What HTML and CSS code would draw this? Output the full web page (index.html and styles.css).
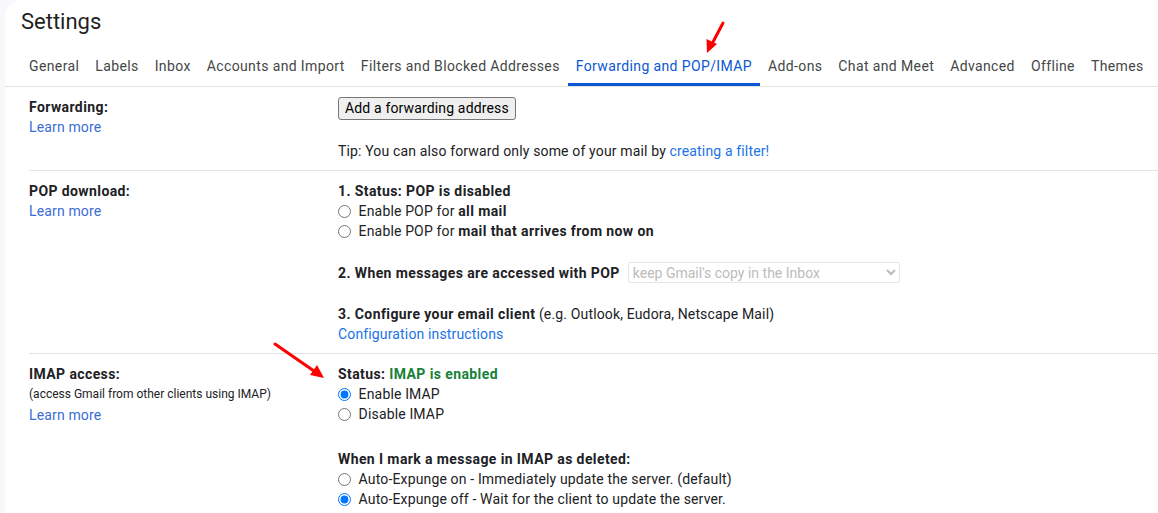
FILE: index.html
```html
<!DOCTYPE html>
<html lang="en">
<head>
  <meta charset="UTF-8" />
  <meta name="viewport" content="width=device-width, initial-scale=1.0"/>
  <title>Settings - Forwarding and POP/IMAP</title>
  <link rel="stylesheet" href="styles.css">
</head>
<body>

  <main class="card">
    <h1 class="title">Settings</h1>

    <!-- Onglets -->
    <nav class="tabs">
      <a class="tab">General</a>
      <a class="tab">Labels</a>
      <a class="tab">Inbox</a>
      <a class="tab">Accounts and Import</a>
      <a class="tab">Filters and Blocked Addresses</a>
      <a class="tab active">Forwarding and POP/IMAP</a>
      <a class="tab">Add-ons</a>
      <a class="tab">Chat and Meet</a>
      <a class="tab">Advanced</a>
      <a class="tab">Offline</a>
      <a class="tab">Themes</a>
    </nav>

    <!-- Forwarding -->
    <section class="row">
      <div class="label-col">
        <div class="label">Forwarding:</div>
        <a class="learn">Learn more</a>
      </div>
      <div class="value-col">
        <button class="btn">Add a forwarding address</button>
        <p class="tip">Tip: You can also forward only some of your mail by <a class="link">creating a filter!</a></p>
      </div>
    </section>

    <!-- POP -->
    <section class="row">
      <div class="label-col">
        <div class="label">POP download:</div>
        <a class="learn">Learn more</a>
      </div>
      <div class="value-col">
        <div class="strong">1. Status: POP is disabled</div>
        <label class="radio"><input type="radio" name="pop"> Enable POP for <b>all mail</b></label>
        <label class="radio"><input type="radio" name="pop"> Enable POP for <b>mail that arrives from now on</b></label>

        <div class="block select-line">
          <span class="strong">2. When messages are accessed with POP</span>
          <select class="select" disabled>
            <option>keep Gmail's copy in the Inbox</option>
          </select>
        </div>

        <div class="block"><span class="strong">3. Configure your email client</span> (e.g. Outlook, Eudora, Netscape Mail)</div>
        <a class="link">Configuration instructions</a>
      </div>
    </section>

    <!-- IMAP -->
    <section class="row">
      <div class="label-col">
        <div class="label">IMAP access:</div>
        <div class="hint">(access Gmail from other clients using IMAP)</div>
        <a class="learn">Learn more</a>
      </div>
      <div class="value-col">
        <div class="strong">Status: <span class="ok">IMAP is enabled</span></div>
        <label class="radio"><input type="radio" name="imap" checked> Enable IMAP</label>
        <label class="radio"><input type="radio" name="imap"> Disable IMAP</label>

        <div class="block-lg strong">When I mark a message in IMAP as deleted:</div>
        <label class="radio"><input type="radio" name="expunge"> Auto-Expunge on - Immediately update the server. (default)</label>
        <label class="radio"><input type="radio" name="expunge" checked> Auto-Expunge off - Wait for the client to update the server.</label>
      </div>
    </section>
  </main>

  <!-- flèches d'annotation -->
  <svg class="annotations" width="1158" height="513" viewBox="0 0 1158 513">
    <line x1="723" y1="23" x2="713" y2="42" stroke="#f00" stroke-width="3" stroke-linecap="round"/>
    <polygon points="707,53 706.5,39 717,44" fill="#f00"/>
    <line x1="275" y1="344" x2="314" y2="371" stroke="#f00" stroke-width="3" stroke-linecap="round"/>
    <polygon points="324,378 310,375 317,365" fill="#f00"/>
  </svg>

</body>
</html>
```

FILE: styles.css
```css
body {
  margin: 0;
  background: #f6f8fc;
  font-family: Roboto, "Liberation Sans", Arial, sans-serif;
  font-size: 14px;
  line-height: 20px;
  letter-spacing: 0.15px;
  color: #202124;
  overflow: hidden;
}
.card {
  margin-left: 5px;
  background: #ffffff;
  border-radius: 16px 0 0 0;
  min-height: 513px;
}
.title {
  margin: 0;
  padding: 8px 0 0 16px;
  font-size: 22px;
  line-height: 28px;
  font-weight: 400;
  letter-spacing: 0;
  color: #1f1f1f;
}
.tabs {
  display: flex;
  margin-top: 10px;
  padding-left: 16px;
  border-bottom: 1px solid #e3e3e3;
  white-space: nowrap;
}
.tab {
  padding: 0 8px;
  height: 40px;
  line-height: 40px;
  letter-spacing: 0.38px;
  color: #444746;
  cursor: pointer;
}
.tab.active {
  color: #0b57d0;
  box-shadow: inset 0 -3px 0 #0b57d0;
}
.row {
  display: grid;
  grid-template-columns: 309px 1fr;
  margin-left: 24px;
  padding: 10px 0 9px;
  border-bottom: 1px solid #e3e3e3;
}
.row:last-child {
  border-bottom: none;
}
.label, .strong, .radio b {
  font-weight: 700;
  letter-spacing: 0.4px;
  color: #202124;
}
.learn {
  display: block;
  color: #3b6cd6;
  cursor: pointer;
}
.hint {
  font-size: 12px;
  line-height: 21px;
  letter-spacing: 0;
  color: #202124;
}
.link {
  color: #1a73e8;
  cursor: pointer;
}
.btn {
  display: block;
  font-family: inherit;
  font-size: 14px;
  line-height: 19px;
  letter-spacing: 0.15px;
  padding: 1px 6px;
  border: 1px solid #767676;
  border-radius: 3px;
  background: #efefef;
  color: #000;
}
.tip {
  margin: 21px 0 0;
}
.radio {
  display: block;
  white-space: nowrap;
}
.radio input {
  margin: 0 4px 0 0;
  width: 13px;
  height: 13px;
  vertical-align: -2px;
}
.block {
  margin-top: 21px;
}
.block-lg {
  margin-top: 25px;
}
.select-line {
  display: flex;
  align-items: center;
  gap: 8px;
  height: 21px;
}
.select {
  width: 272px;
  height: 21px;
  font-family: inherit;
  font-size: 14px;
  letter-spacing: 0;
  color: #a0a0a0;
  border: 1px solid #dcdcdc;
  border-radius: 2px;
  background: #fff;
}
.ok {
  color: #188038;
}
.annotations {
  position: absolute;
  top: 0;
  left: 0;
  pointer-events: none;
}
```
